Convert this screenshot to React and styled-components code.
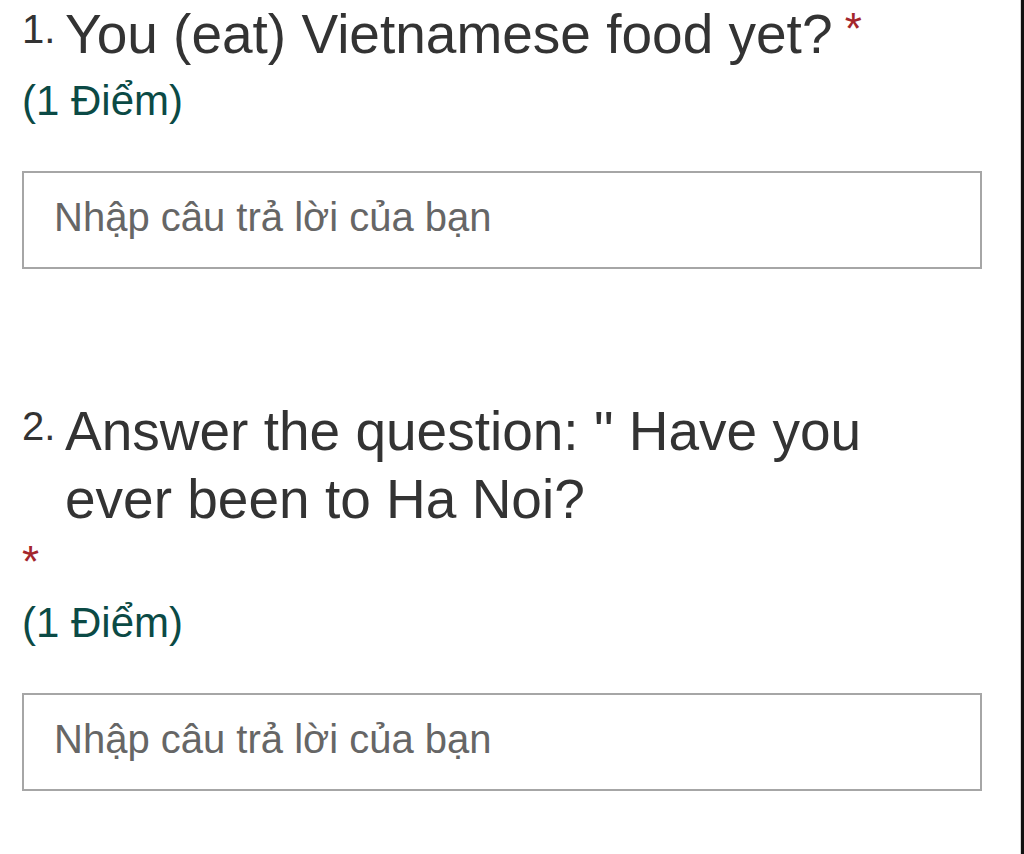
import React from "react"
import styled, { createGlobalStyle } from "styled-components"

const questions = [
  { number: "1.", title: "You (eat) Vietnamese food yet?", points: "(1 Điểm)" },
  {
    number: "2.",
    title: "Answer the question: \" Have you ever been to Ha Noi?",
    points: "(1 Điểm)",
  },
]

const App = () => {
  return (
    <Page>
      <GlobalStyle />
      {questions.map((item, index) => (
        <Question key={index.toString()}>
          <Header>
            <Number>{item.number}</Number>
            <Title>{item.title}</Title> <Required>*</Required>
          </Header>
          <Points>{item.points}</Points>
          <AnswerInput placeholder="Nhập câu trả lời của bạn" />
        </Question>
      ))}
    </Page>
  )
}

const GlobalStyle = createGlobalStyle`
  html, body {
    margin: 0;
    padding: 0;
    background: #ffffff;
  }
  body {
    font-family: "Liberation Sans", Arial, sans-serif;
  }
`

const Page = styled.div`
  box-sizing: border-box;
  width: 1024px;
  height: 854px;
  padding: 0 39px 0 22px;
  border-right: 3px solid #111111;
  box-shadow: inset -1px 0 0 #d8d8d8;
  background: #ffffff;
  overflow: hidden;
`

const Question = styled.div`
  display: flex;
  flex-direction: column;
  margin-bottom: 128px;

  &:last-child {
    margin-bottom: 0;
  }
`

const Header = styled.div`
  font-size: 44px;
  line-height: 55px;
  color: #333333;
`

const Number = styled.span`
  display: inline-block;
  vertical-align: top;
  width: 43px;
  font-size: 40px;
  line-height: 58px;
  color: #333333;
`

const Title = styled.span`
  display: inline-block;
  vertical-align: top;
  max-width: 900px;
  font-size: 55px;
  line-height: 68px;
  color: #333333;
`

const Required = styled.span`
  display: inline-block;
  vertical-align: top;
  font-size: 44px;
  line-height: 57px;
  color: #a4262c;
`

const Points = styled.div`
  margin-top: 9px;
  font-size: 42px;
  line-height: 48px;
  color: #0b4a45;
`

const AnswerInput = styled.input`
  box-sizing: border-box;
  width: 960px;
  height: 98px;
  margin-top: 46px;
  padding: 0 28px 6px 30px;
  border: 2px solid #a6a6a6;
  border-radius: 0;
  background: #ffffff;
  font-family: "Liberation Sans", Arial, sans-serif;
  font-size: 40px;
  color: #333333;
  outline: none;

  &::placeholder {
    color: #666666;
    opacity: 1;
  }
`

export default App
